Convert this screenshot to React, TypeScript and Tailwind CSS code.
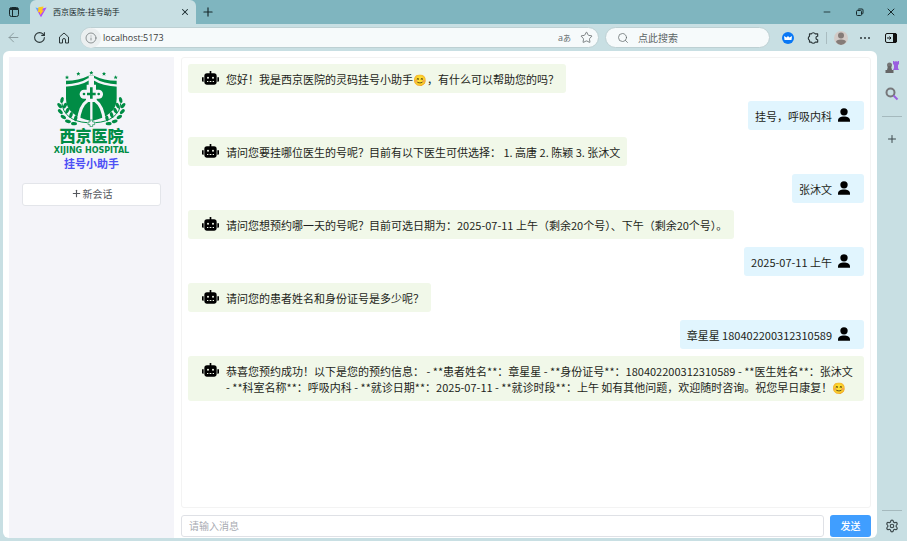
import { useState } from 'react';
import type { ReactNode } from 'react';
import {
  ArrowLeft,
  Info,
  Minus,
  Plus,
  RotateCw,
  Search,
  Settings,
  Star,
  X,
} from 'lucide-react';

interface Message {
  isUser: boolean;
  content: string;
}

const messages: Message[] = [
  {
    isUser: false,
    content: '您好！我是西京医院的灵码挂号小助手😊，有什么可以帮助您的吗？',
  },
  { isUser: true, content: '挂号，呼吸内科' },
  {
    isUser: false,
    content:
      '请问您要挂哪位医生的号呢？目前有以下医生可供选择： 1. 高唐 2. 陈颖 3. 张沐文',
  },
  { isUser: true, content: '张沐文' },
  {
    isUser: false,
    content:
      '请问您想预约哪一天的号呢？目前可选日期为：2025-07-11 上午（剩余20个号）、下午（剩余20个号）。',
  },
  { isUser: true, content: '2025-07-11 上午' },
  { isUser: false, content: '请问您的患者姓名和身份证号是多少呢？' },
  { isUser: true, content: '章星星 180402200312310589' },
  {
    isUser: false,
    content:
      '恭喜您预约成功！以下是您的预约信息： - **患者姓名**：章星星 - **身份证号**：180402200312310589 - **医生姓名**：张沐文 - **科室名称**：呼吸内科 - **就诊日期**：2025-07-11 - **就诊时段**：上午 如有其他问题，欢迎随时咨询。祝您早日康复！😊',
  },
];

const stars = [
  [195, 82],
  [229, 71],
  [268, 68],
  [306, 71],
  [341, 82],
];

// x, y, rotation of each leaf on the left branch
const leaves = [
  [180, 150, -75],
  [173, 167, 50],
  [189, 167, -65],
  [175, 185, 45],
  [196, 182, -65],
  [184, 201, 30],
  [207, 195, -70],
  [198, 214, 15],
  [221, 205, -80],
  [216, 221, 5],
];

function IconButton({
  label,
  className = '',
  children,
}: {
  label: string;
  className?: string;
  children: ReactNode;
}) {
  return (
    <button
      aria-label={label}
      className={`flex shrink-0 items-center justify-center ${className}`}
    >
      {children}
    </button>
  );
}

function ViteLogo() {
  return (
    <svg viewBox="0 0 32 32" className="size-3 shrink-0">
      <defs>
        <linearGradient id="vite" x1="0" y1="0" x2="1" y2="1">
          <stop offset="0" stopColor="#41d1ff" />
          <stop offset="0.4" stopColor="#a855f7" />
          <stop offset="1" stopColor="#bd34fe" />
        </linearGradient>
      </defs>
      <path d="M1 4 L16 30 L31 4 L17 7Z" fill="url(#vite)" />
      <path d="M23 1 L9 3 L8 17 L13 16 L14 24 L24 11 L19 12Z" fill="#ffc71e" />
    </svg>
  );
}

function RobotIcon() {
  return (
    <svg viewBox="0 0 51 42" className="mr-[7px] h-[14px] w-[17px] shrink-0">
      <path
        d="M23 0 H28 V7 H36 Q44 7 44 15 V34 Q44 41 37 41 H14 Q7 41 7 34 V15 Q7 7 15 7 H23Z"
        fill="black"
      />
      <path d="M0 19 H5 V32 H3 Q0 32 0 29Z M51 19 H46 V32 H48 Q51 32 51 29Z" fill="black" />
      <g fill="#f1f8e9">
        <circle cx="18" cy="20" r="3" />
        <circle cx="33" cy="20" r="3" />
        <path d="M15 30 H19 V33 H15Z M23 30 H28 V33 H23Z M32 30 H36 V33 H32Z" />
      </g>
    </svg>
  );
}

function UserIcon() {
  return (
    <svg viewBox="0 0 36 41" className="ml-[6px] h-[14px] w-3 shrink-0">
      <circle cx="18" cy="11" r="11" />
      <path d="M0 41 V37 C0 29 8 25 18 25 S36 29 36 37 V41Z" />
    </svg>
  );
}

function Branch() {
  return (
    <g fill="#008c45">
      {leaves.map(([x, y, r]) => (
        <ellipse
          key={`${x}-${y}`}
          cx={x}
          cy={y}
          rx="9"
          ry="5"
          transform={`rotate(${r} ${x} ${y})`}
        />
      ))}
      <path
        d="M180 160 C182 192 210 216 256 218"
        fill="none"
        stroke="#008c45"
        strokeWidth="3"
      />
    </g>
  );
}

function HospitalLogo() {
  return (
    <div className="flex flex-col items-center text-[#008c45]">
      <svg viewBox="150 60 240 171" className="h-[57px] w-20">
        {stars.map(([x, y]) => (
          <path
            key={x}
            transform={`translate(${x} ${y})`}
            d="M0 -6 L2 -2 L6 -2 L3 1 L4 6 L0 3 L-4 6 L-3 1 L-6 -2 L-2 -2Z"
            fill="#008c45"
          />
        ))}
        <path
          d="M192 92 Q230 92 260 77 H276 Q306 92 344 92 V147 C344 180 318 203 268 213 C218 203 192 180 192 147Z"
          fill="#008c45"
        />
        <g fill="none" stroke="#f4f4f9">
          <path d="M188 107 Q234 105 260 88 H276 Q302 105 348 107" strokeWidth="7" />
          <path d="M256 152 C238 164 231 186 229 216" strokeWidth="9" />
          <path d="M280 152 C298 164 305 186 307 216" strokeWidth="9" />
          <path d="M268 150 V214" strokeWidth="7" />
        </g>
        <g fill="#f4f4f9">
          <path d="M260 78 H276 V104 H282 V122 H254 V104 H260Z" />
          <rect x="233" y="119" width="70" height="27" rx="13" />
          <path d="M252 142 H284 V156 H252Z" />
        </g>
        <g fill="#008c45">
          <circle cx="246" cy="132" r="4" />
          <circle cx="290" cy="132" r="4" />
          <path d="M264 112 H272 V128 H281 V136 H272 V146 H264 V136 H255 V128 H264Z" />
        </g>
        <Branch />
        <g transform="translate(536 0) scale(-1 1)">
          <Branch />
        </g>
        <path
          d="M264 210 H272 V216 H278 V224 H272 V230 H264 V224 H258 V216 H264Z"
          fill="#f4f4f9"
          stroke="#008c45"
          strokeWidth="2"
        />
      </svg>
      <span className="text-[16px] leading-4 font-black">西京医院</span>
      <span className="mt-1 font-['DejaVu_Sans',sans-serif] text-[8px] leading-2 font-bold">
        XIJING HOSPITAL
      </span>
    </div>
  );
}

function TitleBar() {
  return (
    <header className="flex h-6 shrink-0 items-stretch bg-[#7fb5bf] text-[#17282b]">
      <IconButton label="标签页操作" className="w-[28px]">
        <svg viewBox="0 0 12 12" className="size-3" fill="none" stroke="currentColor">
          <rect x="1.5" y="1.5" width="9" height="9" rx="2" />
          <path d="M2 3 H10" strokeWidth="2" />
          <path d="M4.5 3 V10" />
        </svg>
      </IconButton>
      <div className="ml-[2px] flex w-[166px] items-center rounded-t-md bg-[#c8dfe3] pr-[3px] pl-[5px]">
        <ViteLogo />
        <span className="ml-[6px] flex-1 text-[8px]">西京医院-挂号助手</span>
        <IconButton label="关闭标签页" className="size-4">
          <X className="size-[10px]" strokeWidth={2.5} />
        </IconButton>
      </div>
      <IconButton label="新建标签页" className="w-6">
        <Plus className="size-[14px]" strokeWidth={2} />
      </IconButton>
      <div className="ml-auto flex">
        <IconButton label="最小化" className="w-8">
          <Minus className="size-[10px]" />
        </IconButton>
        <IconButton label="还原" className="w-8">
          <svg viewBox="0 0 9 9" className="size-[9px]" fill="none" stroke="currentColor">
            <rect x="1.5" y="2.5" width="5" height="5" rx="1" />
            <path d="M3 1.5 Q3 1 4 1 H7 Q8 1 8 2 V5 Q8 6 7 6" />
          </svg>
        </IconButton>
        <IconButton label="关闭" className="w-8">
          <X className="size-3" strokeWidth={2} />
        </IconButton>
      </div>
    </header>
  );
}

function ToolBar() {
  return (
    <nav className="flex h-[27px] shrink-0 items-center pr-2 text-[#2b3638]">
      <IconButton label="后退" className="w-[27px] text-[#88999c]">
        <ArrowLeft className="size-[15px]" strokeWidth={1.5} />
      </IconButton>
      <IconButton label="刷新" className="w-6">
        <RotateCw className="size-[13px]" strokeWidth={2} />
      </IconButton>
      <IconButton label="主页" className="w-[25px]">
        <svg
          viewBox="0 0 12 12"
          className="size-3"
          fill="none"
          stroke="currentColor"
          strokeLinejoin="round"
        >
          <path d="M1.5 5 L6 1 L10.5 5 V11 H7.5 V8 Q7.5 6.5 6 6.5 T4.5 8 V11 H1.5Z" />
        </svg>
      </IconButton>
      <div className="ml-1 flex h-[21px] flex-1 items-center rounded-full border border-[#bdd0d3] bg-[#f6fafb] pr-[5px]">
        <span className="flex size-5 items-center justify-center rounded-full bg-[#ebeff0]">
          <Info className="size-3 text-[#6d7476]" strokeWidth={1.5} />
        </span>
        <input
          aria-label="地址"
          defaultValue="localhost:5173"
          className="ml-[2px] min-w-0 flex-1 bg-transparent font-['Open_Sans',sans-serif] text-[9px] text-[#3a3a3a] outline-none"
        />
        <button
          aria-label="翻译"
          className="mr-2 flex items-baseline font-['Open_Sans','Noto_Sans_CJK_JP',sans-serif] text-[9px] leading-3 text-[#62696b]"
        >
          a<span className="text-[8px]">あ</span>
        </button>
        <IconButton label="收藏" className="w-[14px]">
          <Star className="size-[13px] text-[#62696b]" strokeWidth={1.5} />
        </IconButton>
      </div>
      <label className="ml-[6px] flex h-[21px] w-[165px] items-center rounded-full border border-[#bdd0d3] bg-[#f6fafb] pl-[11px]">
        <Search className="size-3 shrink-0 text-[#62696b]" strokeWidth={1.5} />
        <input
          aria-label="搜索"
          placeholder="点此搜索"
          className="ml-[9px] w-full bg-transparent text-[10px] outline-none placeholder:text-[#5d6567]"
        />
      </label>
      <IconButton label="扩展助手" className="ml-[6px] w-6">
        <svg viewBox="0 0 12 12" className="size-3">
          <circle cx="6" cy="6" r="6" fill="#0a78f5" />
          <path
            d="M2 4 L4.5 5.5 L6 4 L7.5 5.5 L10 4 L9.5 8 H2.5Z"
            fill="white"
          />
        </svg>
      </IconButton>
      <IconButton label="扩展" className="w-[26px]">
        <svg
          viewBox="0 0 24 24"
          className="size-[14px]"
          fill="none"
          stroke="currentColor"
          strokeWidth="2"
          strokeLinejoin="round"
        >
          <path d="M6 5 H9 A4 4 0 0 1 16 5 H20 V9 A3 3 0 0 0 20 15 V19 H16 A4 4 0 0 1 9 19 H6 V16 A4 4 0 0 1 6 9Z" />
        </svg>
      </IconButton>
      <span className="h-3 w-px bg-[#a9bcc0]" />
      <IconButton label="个人资料" className="w-[28px]">
        <svg viewBox="0 0 14 14" className="size-[14px]">
          <circle cx="7" cy="7" r="7" fill="#d2cbc7" />
          <circle cx="7" cy="4.5" r="3" fill="#857c78" />
          <path d="M2 11 Q2 8.5 7 8.5 T12 11 Q10 14 7 14 T2 11Z" fill="#857c78" />
        </svg>
      </IconButton>
      <IconButton label="更多" className="w-5">
        <svg viewBox="0 0 12 4" className="h-1 w-3" fill="currentColor">
          <circle cx="2" cy="2" r="1" />
          <circle cx="6" cy="2" r="1" />
          <circle cx="10" cy="2" r="1" />
        </svg>
      </IconButton>
      <IconButton label="侧栏" className="ml-2 w-4">
        <svg viewBox="0 0 12 12" className="size-3" fill="none" stroke="#111">
          <rect x="0.5" y="1.5" width="11" height="9" rx="1.5" />
          <path d="M8.5 1.5 H10 Q11.5 1.5 11.5 3 V9 Q11.5 10.5 10 10.5 H8.5Z" fill="#111" />
          <path d="M2 6 H6 M4.5 4.5 L6 6 L4.5 7.5" />
        </svg>
      </IconButton>
    </nav>
  );
}

function Sidebar() {
  return (
    <aside className="flex w-[165px] shrink-0 flex-col items-center bg-[#f4f4f9] px-[13px] pt-[13px]">
      <HospitalLogo />
      <h1 className="text-[11px] leading-4 font-bold text-[#4d50f5]">
        挂号小助手
      </h1>
      <button className="mt-3 flex h-[23px] w-full items-center justify-center gap-px rounded-[3px] border border-[#e3e5ea] bg-white pb-[2px] text-[10px] text-[#55585e]">
        <Plus className="size-[11px]" strokeWidth={2.5} />
        新会话
      </button>
    </aside>
  );
}

function ChatMessage({ isUser, content }: Message) {
  if (isUser) {
    return (
      <li className="mb-[7px] flex max-w-full items-start self-end rounded-[3px] bg-[#e1f5fe] pt-[7px] pr-[14px] pb-[6px] pl-[7px]">
        <p>{content}</p>
        <UserIcon />
      </li>
    );
  }
  return (
    <li className="mb-2 flex max-w-full items-start rounded-[3px] bg-[#f1f8e9] pt-[7px] pr-[7px] pb-[6px] pl-[14px]">
      <RobotIcon />
      <p>{content}</p>
    </li>
  );
}

function ChatPanel() {
  const [text, setText] = useState('');

  return (
    <main className="flex min-w-0 flex-1 flex-col">
      <ul className="flex min-h-0 flex-1 flex-col items-start overflow-hidden rounded-[3px] border border-[#f3f3f3] px-[6px] pt-[6px] text-[11px] leading-4 text-[#1d1f20]">
        {messages.map((message) => (
          <ChatMessage key={message.content} {...message} />
        ))}
      </ul>
      <form
        className="mt-[7px] mb-px flex gap-[6px]"
        onSubmit={(e) => e.preventDefault()}
      >
        <input
          aria-label="消息"
          placeholder="请输入消息"
          value={text}
          onChange={(e) => setText(e.target.value)}
          className="h-[22px] min-w-0 flex-1 rounded-[3px] border border-[#dfe1e6] px-[7px] pb-[2px] text-[10px] outline-none placeholder:text-[#a8abb2]"
        />
        <button className="h-[22px] w-[41px] rounded-[3px] bg-[#409eff] pb-[2px] text-[10px] font-medium text-white">
          发送
        </button>
      </form>
    </main>
  );
}

function EdgeBar() {
  return (
    <aside className="flex w-[30px] shrink-0 flex-col items-center pt-[9px] text-[#3c494c]">
      <IconButton label="游戏" className="size-[14px]">
        <svg viewBox="0 0 14 14" className="size-[14px]">
          <path
            d="M8 1 H9.5 V2 H10.3 V1 H11.7 V2 H12.5 V1 H14 V4 L13 5 V8 L14 10 H8 L9 8 V5 L8 4Z"
            fill="#9a5fe0"
          />
          <circle cx="4.5" cy="5" r="2.5" fill="#767676" />
          <path d="M3 6 H6 L7 10 H8.5 V13 H0.5 V10 H2Z" fill="#666" />
        </svg>
      </IconButton>
      <IconButton label="搜索侧栏" className="mt-[13px] size-[14px]">
        <svg viewBox="0 0 14 14" className="size-[14px]" fill="none" strokeWidth="2">
          <circle cx="5.5" cy="5.5" r="4" stroke="#77777a" />
          <path d="M8.5 8.5 L12.5 12.5" stroke="#9a5fe0" />
        </svg>
      </IconButton>
      <span className="mt-[15px] h-px w-5 bg-[#a5b9bd]" />
      <IconButton label="添加" className="mt-4 size-3">
        <Plus className="size-3" strokeWidth={2} />
      </IconButton>
      <span className="mt-auto h-px w-5 bg-[#a5b9bd]" />
      <IconButton label="设置" className="mt-2 mb-[5px] size-[14px]">
        <Settings className="size-[14px]" strokeWidth={2} />
      </IconButton>
    </aside>
  );
}

export default function App() {
  return (
    <div className="flex h-screen flex-col overflow-hidden bg-[#c8dfe3] font-['Noto_Sans_CJK_SC',sans-serif]">
      <TitleBar />
      <ToolBar />
      <div className="flex min-h-0 flex-1 pb-[3px] pl-[3px]">
        <div className="flex min-w-0 flex-1 gap-[7px] overflow-hidden rounded-md bg-white pt-[6px] pr-[6px] pl-[6px]">
          <Sidebar />
          <ChatPanel />
        </div>
        <EdgeBar />
      </div>
    </div>
  );
}
